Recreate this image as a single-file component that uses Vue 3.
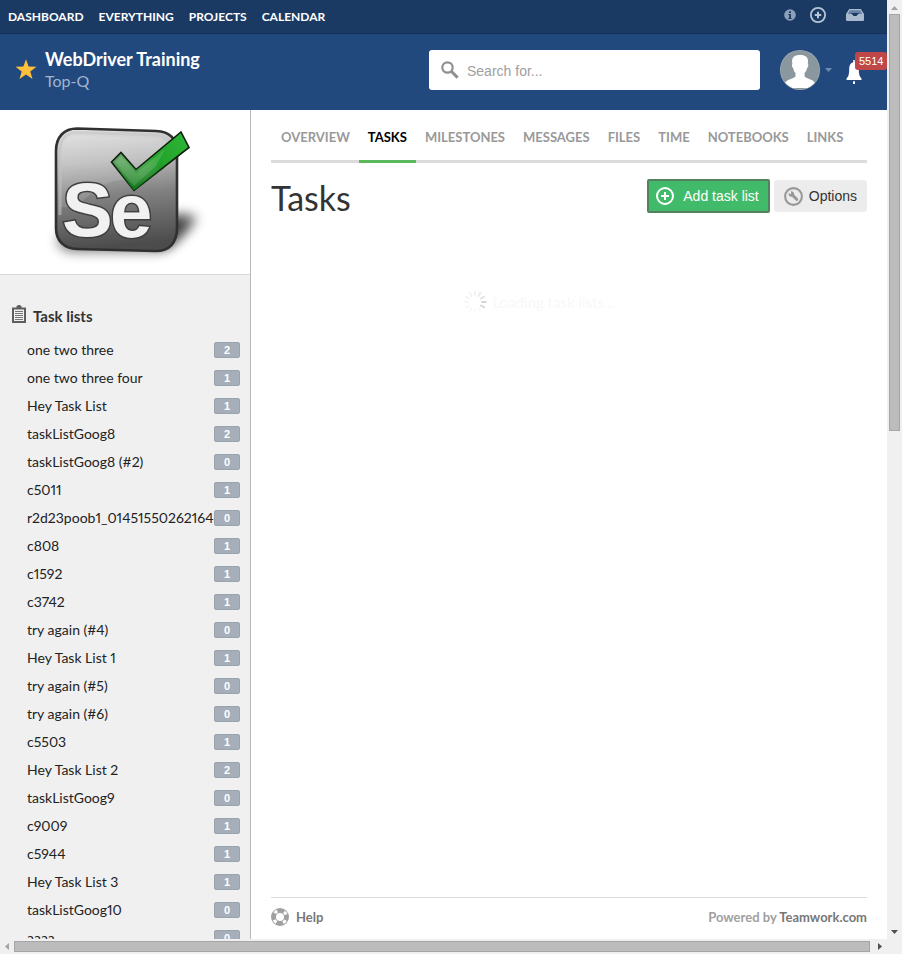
<script setup>
const topLinks = ['DASHBOARD', 'EVERYTHING', 'PROJECTS', 'CALENDAR']
const tabs = ['OVERVIEW', 'TASKS', 'MILESTONES', 'MESSAGES', 'FILES', 'TIME', 'NOTEBOOKS', 'LINKS']
const lists = [
  ['one two three', 2],
  ['one two three four', 1],
  ['Hey Task List', 1],
  ['taskListGoog8', 2],
  ['taskListGoog8 (#2)', 0],
  ['c5011', 1],
  ['r2d23poob1_01451550262164', 0],
  ['c808', 1],
  ['c1592', 1],
  ['c3742', 1],
  ['try again (#4)', 0],
  ['Hey Task List 1', 1],
  ['try again (#5)', 0],
  ['try again (#6)', 0],
  ['c5503', 1],
  ['Hey Task List 2', 2],
  ['taskListGoog9', 0],
  ['c9009', 1],
  ['c5944', 1],
  ['Hey Task List 3', 1],
  ['taskListGoog10', 0],
  ['aaaa', 0],
]
const spokes = [0.3, 0.42, 0.7, 1, 1, 0.12, 0.12, 0.12, 0.15, 0.18, 0.22, 0.26]
</script>

<template>
  <div class="frame">
    <div class="page">
      <header>
        <div class="topbar">
          <nav class="toplinks">
            <a v-for="l in topLinks" :key="l" href="#">{{ l }}</a>
          </nav>
          <div class="topicons">
            <button type="button" aria-label="Information">
              <svg width="12" height="12" viewBox="0 0 12 12">
                <circle cx="6" cy="6" r="5.8" fill="#8da0ba" />
                <path d="M4.4 5h2.5v4h.8v1H4.3V9h.8V6h-.7zM5 2.2h1.9v1.8H5z" fill="#1b3a63" />
              </svg>
            </button>
            <button type="button" aria-label="Add">
              <svg width="16" height="16" viewBox="0 0 16 16" fill="none" stroke="#b9c6d8">
                <circle cx="8" cy="8" r="7.1" stroke-width="1.8" />
                <path d="M8 4.8v6.4M4.8 8h6.4" stroke-width="2" />
              </svg>
            </button>
            <button type="button" aria-label="Inbox" class="inbox">
              <svg width="18" height="12" viewBox="0 0 18 12">
                <path d="M3.2 0h11.6L18 5v5.5c0 1-.5 1.500-1.500 1.500h-15C.5 12 0 11.500 0 10.500V5z" fill="#a9bace" />
                <path d="M3.800 1.200h10.400l2 3.800H1.800z" fill="#6582a6" />
                <path d="M5 4h8l-1 1.500h-.5L10.500 7h-3L6.500 5.500H6z" fill="#1b3a63" />
              </svg>
            </button>
          </div>
        </div>
        <div class="banner">
          <svg class="star" width="22" height="22" viewBox="0 0 22 22">
            <path d="M11 .3l2.600 7.300 7.900.2-6.200 4.700 2.200 7.500L11 15.600l-6.500 4.400 2.200-7.500L.5 7.800l7.900-.2z" fill="#ffc03c" />
          </svg>
          <div class="project">
            <strong>WebDriver Training</strong>
            <span>Top-Q</span>
          </div>
          <label class="search">
            <svg width="18" height="18" viewBox="0 0 18 18" fill="none" stroke="#8f8f8f">
              <circle cx="6.500" cy="6.500" r="5.200" stroke-width="2.200" />
              <path d="M10.300 10.300l6.300 6.300" stroke-width="3" />
            </svg>
            <input type="text" placeholder="Search for..." aria-label="Search" />
          </label>
          <button type="button" class="account" aria-label="Account">
            <svg width="40" height="40" viewBox="0 0 40 40">
              <defs><clipPath id="face"><circle cx="20" cy="20" r="19.400" /></clipPath></defs>
              <circle cx="20" cy="20" r="20" fill="#a3adb3" />
              <circle cx="20" cy="20" r="19.300" fill="#8b979e" />
              <path clip-path="url(#face)" d="M12.400 14C11 7 14.500 5 20 5c6 0 9 2.500 7.800 9 1 .5.600 3.500-.8 4-.3 2.500-1.200 3.800-2.400 5v3.500c2 2.600 8 2.400 10.500 6.500L33 38H6l-1.500-5c3-4 9-4 11-6.500V23c-1.200-1.200-2-2.600-2.300-5-1.400-.5-1.800-3.500-.8-4z" fill="#fff" />
            </svg>
            <svg width="7" height="4" viewBox="0 0 7 4"><path d="M0 0h7L3.500 4z" fill="#6f8bb0" /></svg>
          </button>
          <button type="button" class="alerts" aria-label="Notifications">
            <svg width="16" height="24" viewBox="0 0 16 24" fill="#fff">
              <path d="M7.200 0h1.600v2.200C12 3 12.800 6 12.800 9.500c0 4.500.8 7.500 2.700 9V20H.5v-1.500c1.900-1.500 2.700-4.500 2.700-9C3.200 6 4 3 7.200 2.200z" />
              <path d="M7 21.300h2V24H7z" />
            </svg>
            <span class="count">5514</span>
          </button>
        </div>
      </header>

      <div class="body">
        <aside>
          <div class="logo">
            <svg width="250" height="164" viewBox="0 0 250 164" role="img" aria-label="Selenium">
              <defs>
                <linearGradient id="plate" x1="0" y1="0" x2="0.100" y2="1">
                  <stop offset="0" stop-color="#e4e4e4" />
                  <stop offset="0.300" stop-color="#bcbcbc" />
                  <stop offset="0.580" stop-color="#828282" />
                  <stop offset="1" stop-color="#4c4c4c" />
                </linearGradient>
                <linearGradient id="tick" x1="0" y1="0.600" x2="1" y2="0.200">
                  <stop offset="0" stop-color="#5f9d60" />
                  <stop offset="0.300" stop-color="#60ac60" />
                  <stop offset="0.550" stop-color="#22a129" />
                  <stop offset="1" stop-color="#2cb536" />
                </linearGradient>
                <linearGradient id="tickLow" x1="0" y1="0" x2="0" y2="1">
                  <stop offset="0.500" stop-color="#12801c" stop-opacity="0" />
                  <stop offset="1" stop-color="#0b7417" />
                </linearGradient>
                <filter id="soft" x="-30%" y="-50%" width="160%" height="200%"><feGaussianBlur stdDeviation="6" /></filter>
              </defs>
              <path d="M60 124L177 104c18-2 24 3 16 11-8 9-18 22-36 27H74c-14 0-20-10-14-18z" fill="#000" opacity=".5" filter="url(#soft)" />
              <path d="M170 108c18 0 22 4 14 12l-16 18h-12z" fill="#000" opacity=".5" filter="url(#soft)" />
              <path d="M77 18.500L156 21c14 .5 21 8 21 22v75c0 15-8 23.500-22 23L77 139c-13-.5-21-8-21-21V41c0-14 8-22.500 21-22.500z" fill="url(#plate)" stroke="#303030" stroke-width="2.600" />
              <path d="M77 22.500l78 2.300c12 .4 18 7 18 18M60 105V41c0-12 6-18.500 17-18.500" fill="none" stroke="#c4c4c4" stroke-opacity=".6" stroke-width="3" />
              <path d="M61 97V44c0-13 6-18 17-18l76 2c11 .5 16 6 16 17v10C150 66 136 68 120 70 90 73 86 100 61 97z" fill="#fff" opacity=".12" />
              <text x="62" y="126" class="mark">S</text>
              <text x="110" y="127" class="mark">e</text>
              <path d="M111.500 52l9.500-9.500 15 17L181 22l8 15.500L134 80.500z" fill="url(#tick)" stroke="#0c1f0d" stroke-width="1.600" />
              <path d="M111.500 52l9.500-9.500 15 17L181 22l8 15.500L134 80.500z" fill="url(#tickLow)" />
              <path d="M115 52l6-6 15 17.500L165 39l-9 17-22 20z" fill="#c9f0c9" opacity=".17" />
            </svg>
          </div>
          <h2>
            <svg width="16" height="18" viewBox="0 0 16 18">
              <path d="M1 2.500h4.500V1h1V0h3v1h1v1.500H15V18H1z" fill="#5e5e5e" />
              <path d="M3 4.500h10V16H3z" fill="#f0f0f0" />
              <path d="M4 6.500h8M4 8.500h8M4 10.500h8M4 12.500h8M4 14.500h8" stroke="#777" />
            </svg>
            <span>Task lists</span>
          </h2>
          <ul>
            <li v-for="[name, n] in lists" :key="name">
              <a href="#">{{ name }}</a><span>{{ n }}</span>
            </li>
          </ul>
        </aside>

        <main>
          <nav class="tabs">
            <a v-for="t in tabs" :key="t" href="#" :class="{ active: t === 'TASKS' }">{{ t }}</a>
          </nav>
          <div class="heading">
            <h1>Tasks</h1>
            <button type="button" class="add">
              <svg width="18" height="18" viewBox="0 0 18 18" fill="none" stroke="#fff" stroke-width="2">
                <circle cx="9" cy="9" r="8" /><path d="M9 5v8M5 9h8" />
              </svg>
              Add task list
            </button>
            <button type="button" class="options">
              <svg width="19" height="19" viewBox="0 0 19 19">
                <circle cx="9.500" cy="9.500" r="8.400" fill="none" stroke="#989898" stroke-width="2.100" />
                <path d="M4.600 6.300l2 .7.800-.8-.8-2c2.200-.4 4 1.300 3.500 3.400l4 4.200c.8 1.200-.8 2.800-2 2L8 9.700C6 10.300 4.200 8.500 4.600 6.300z" fill="#989898" />
              </svg>
              Options
            </button>
          </div>
          <p class="loading">
            <svg width="24" height="24" viewBox="0 0 24 24" stroke="#d4d4d4" stroke-width="2" stroke-linecap="round">
              <path v-for="(o, i) in spokes" :key="i" d="M12 1.500v3.500" :opacity="o" :transform="`rotate(${i * 30} 12 12)`" />
            </svg>
            Loading task lists...
          </p>
          <footer>
            <a href="#" class="help">
              <svg width="18" height="18" viewBox="0 0 18 18" fill="none">
                <circle cx="9" cy="9" r="6.500" stroke="#a0a0a0" stroke-width="5" />
                <circle cx="9" cy="9" r="6.500" stroke="#fff" stroke-width="3" stroke-dasharray="3.200 7.010" stroke-dashoffset="-3.500" />
              </svg>
              Help
            </a>
            <span class="powered">Powered by <a href="#">Teamwork.com</a></span>
          </footer>
        </main>
      </div>
    </div>

    <div class="scroll vertical">
      <svg width="15" height="14" viewBox="0 0 15 14"><path d="M4 10l3.500-4L11 10z" fill="#a3a3a3" /></svg>
      <div class="track"><i></i></div>
      <svg width="15" height="14" viewBox="0 0 15 14"><path d="M4 5l3.500 4L11 5z" fill="#505050" /></svg>
    </div>
    <div class="scroll horizontal">
      <svg width="14" height="15" viewBox="0 0 14 15"><path d="M9 4L5 7.500 9 11z" fill="#a3a3a3" /></svg>
      <div class="track"><i></i></div>
      <svg width="14" height="15" viewBox="0 0 14 15"><path d="M5 4l4 3.500L5 11z" fill="#505050" /></svg>
    </div>
  </div>
</template>

<style>
body {
  margin: 0;
  background: #f0f0f0;
}
</style>

<style scoped>
.frame {
  display: grid;
  grid-template-columns: minmax(0, 1fr) 15px;
  grid-template-rows: minmax(0, 1fr) 15px;
  height: 100vh;
  font-family: Lato, "Liberation Sans", sans-serif;
  color: #222;
}
.frame * {
  box-sizing: border-box;
}
svg {
  display: block;
  flex: none;
}
a {
  color: inherit;
  text-decoration: none;
}
button {
  border: 0;
  padding: 0;
  background: none;
  cursor: pointer;
}
.page {
  display: flex;
  flex-direction: column;
  overflow: hidden;
  background: #fff;
}
.topbar {
  display: flex;
  justify-content: space-between;
  height: 34px;
  padding: 0 23px 0 8px;
  background: #1b3a63;
  border-bottom: 1px solid #15305a;
}
.toplinks {
  display: flex;
  align-items: center;
  gap: 15px;
  color: #fff;
  font-size: 12px;
  font-weight: 700;
}
.topicons {
  display: flex;
  align-items: center;
  gap: 14px;
  padding-bottom: 3px;
}
.inbox {
  margin-left: 6px;
}
.banner {
  display: flex;
  align-items: center;
  height: 76px;
  padding: 0 25px 4px 15px;
  background: #22497d;
}
.star {
  margin-right: 8px;
}
.project {
  display: flex;
  flex: 1;
  flex-direction: column;
  line-height: 22px;
}
.project strong {
  color: #fff;
  font-size: 18px;
}
.project span {
  color: #a0b3d0;
  font-size: 16px;
}
.search {
  display: flex;
  align-items: center;
  flex: 0 1 331px;
  height: 40px;
  padding: 0 12px;
  gap: 8px;
  border-radius: 3px;
  background: #fff;
}
.search input {
  flex: 1;
  min-width: 0;
  border: 0;
  padding: 2px 0 0;
  outline: 0;
  background: none;
  font: 14px "Liberation Sans", sans-serif;
}
.search input::placeholder {
  color: #a0a0a0;
}
.account {
  display: flex;
  align-items: center;
  gap: 5px;
  margin-left: 20px;
}
.alerts {
  position: relative;
  margin: 4px 0 0 14px;
}
.count {
  position: absolute;
  top: -8px;
  left: 9px;
  padding: 0 4px;
  border-radius: 3px;
  background: #c04747;
  color: #fff;
  font: 11px/18px "Liberation Sans", sans-serif;
}
.body {
  display: flex;
  flex: 1;
  min-height: 0;
}
aside {
  flex: none;
  width: 251px;
  overflow: hidden;
  border-right: 1px solid #b8b8b8;
  background: #f0f0f0;
}
.logo {
  border-bottom: 1px solid #d8d8d8;
  background: #fff;
}
.mark {
  font: bold 76px "Liberation Sans", sans-serif;
  fill: #f1f1f1;
  stroke: #3f3f3f;
  stroke-width: 3px;
  paint-order: stroke;
}
h2 {
  display: flex;
  align-items: flex-start;
  gap: 6px;
  margin: 30px 0 8px 11px;
  font-size: 15px;
  line-height: 23px;
  color: #333;
}
ul {
  margin: 0;
  padding: 0 10px 0 27px;
  list-style: none;
}
li {
  display: flex;
  align-items: center;
  justify-content: space-between;
  height: 28px;
  font-size: 14px;
  font-variant-numeric: proportional-nums;
}
li a {
  min-width: 0;
  padding-bottom: 2px;
  white-space: nowrap;
}
li span {
  position: relative;
  flex: none;
  width: 26px;
  border: 1px solid #99a3ae;
  border-radius: 2px;
  background: #a5aeb9;
  color: #fff;
  text-align: center;
  font: bold 11px/14px "Liberation Sans", sans-serif;
}
main {
  display: flex;
  flex: 1;
  flex-direction: column;
  min-width: 0;
  padding: 0 20px;
}
.tabs {
  display: flex;
  padding-left: 1px;
  border-bottom: 3px solid #dcdcdc;
  color: #999;
  font-size: 13px;
  font-weight: 700;
  line-height: 55px;
}
.tabs a {
  height: 53px;
  margin-bottom: -3px;
  padding: 0 9px;
}
.tabs .active {
  border-bottom: 3px solid #5cb85c;
  color: #000;
}
.heading {
  display: flex;
  align-items: flex-start;
  gap: 4px;
  margin-top: 16px;
}
h1 {
  flex: 1;
  margin: 0;
  color: #333;
  font-size: 34px;
  font-weight: 400;
  line-height: 38px;
}
.heading button {
  display: flex;
  align-items: center;
  height: 34px;
  border-radius: 4px;
  font: 14px "Liberation Sans", sans-serif;
}
.heading .add {
  gap: 9px;
  padding: 0 9px 0 7px;
  border: 2px solid #55805f;
  border-radius: 2px;
  background: #41bb69;
  color: #fff;
}
.heading .options {
  gap: 6px;
  padding: 0 10px;
  border: solid #fff;
  border-width: 1px 0;
  background: #ececec;
  color: #333;
}
.loading {
  display: flex;
  align-items: center;
  justify-content: center;
  gap: 5px;
  margin: 73px 0 0;
  padding-right: 60px;
  color: #f8f8f8;
  font-size: 15px;
  line-height: 24px;
}
footer {
  display: flex;
  justify-content: space-between;
  align-items: center;
  height: 42px;
  margin-top: auto;
  padding-bottom: 4px;
  border-top: 1px solid #dcdcdc;
  color: #a0a0a0;
  font-size: 13px;
  font-weight: 700;
}
.help {
  display: flex;
  align-items: center;
  gap: 7px;
}
footer a {
  color: #777;
}
.scroll {
  display: flex;
  background: #f0f0f0;
}
.vertical {
  flex-direction: column;
}
.track {
  flex: 1;
  padding: 0 2px;
}
.track i {
  display: block;
  height: calc(46% - 2px);
  border: 1px solid #a5a5a5;
  background: #bcbcbc;
}
.horizontal .track {
  padding: 2px 3px 2px 0;
}
.horizontal .track i {
  width: 100%;
  height: 100%;
}
</style>
